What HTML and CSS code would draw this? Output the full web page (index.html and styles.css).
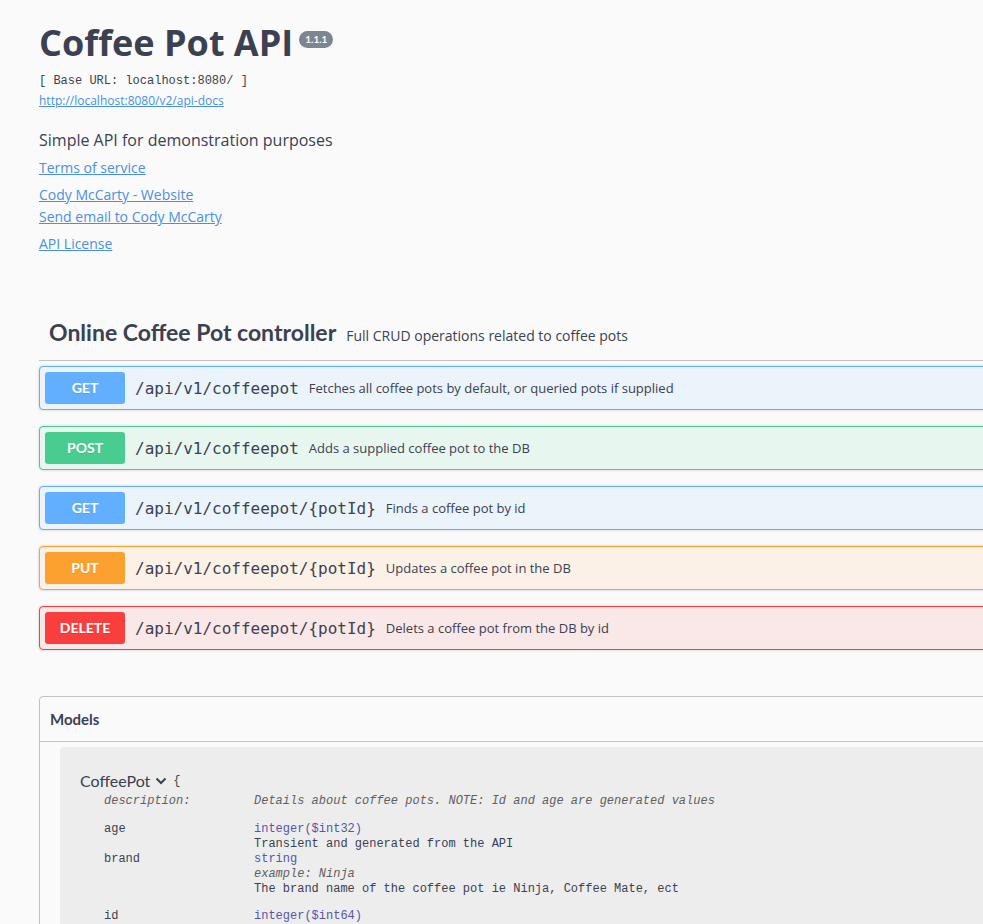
FILE: index.html
```html
<!DOCTYPE html>
<html lang="en">
<head>
<meta charset="utf-8">
<title>Coffee Pot API</title>
<link rel="stylesheet" href="styles.css">
</head>
<body>
<div class="wrapper">
  <section class="info">
    <div class="title-row">
      <h2 class="title">Coffee Pot API</h2>
      <span class="version">1.1.1</span>
    </div>
    <div class="base-url">[ Base URL: localhost:8080/ ]</div>
    <a class="spec-link" href="#">http://localhost:8080/v2/api-docs</a>
    <p class="desc">Simple API for demonstration purposes</p>
    <div class="info-link tos"><a href="#">Terms of service</a></div>
    <div class="info-link contact"><a href="#">Cody McCarty - Website</a></div>
    <div class="info-link email"><a href="#">Send email to Cody McCarty</a></div>
    <div class="info-link license"><a href="#">API License</a></div>
  </section>

  <section class="tag">
    <h4 class="tag-header">
      <span class="tag-name">Online Coffee Pot controller</span>
      <span class="tag-desc">Full CRUD operations related to coffee pots</span>
    </h4>
    <div class="ops">
      <div class="op get">
        <span class="method">GET</span>
        <span class="path">/api/v1/coffeepot</span>
        <span class="summary">Fetches all coffee pots by default, or queried pots if supplied</span>
      </div>
      <div class="op post">
        <span class="method">POST</span>
        <span class="path">/api/v1/coffeepot</span>
        <span class="summary">Adds a supplied coffee pot to the DB</span>
      </div>
      <div class="op get">
        <span class="method">GET</span>
        <span class="path">/api/v1/coffeepot/{potId}</span>
        <span class="summary">Finds a coffee pot by id</span>
      </div>
      <div class="op put">
        <span class="method">PUT</span>
        <span class="path">/api/v1/coffeepot/{potId}</span>
        <span class="summary">Updates a coffee pot in the DB</span>
      </div>
      <div class="op delete">
        <span class="method">DELETE</span>
        <span class="path">/api/v1/coffeepot/{potId}</span>
        <span class="summary">Delets a coffee pot from the DB by id</span>
      </div>
    </div>
  </section>

  <section class="models">
    <h4 class="models-header">Models</h4>
    <div class="models-body">
      <div class="model">
        <div class="model-title">
          <span class="model-name">CoffeePot</span>
          <svg class="chevron" width="12" height="8" viewBox="0 0 12 8"><path d="M1.5 1.5 L6 6 L10.5 1.5" fill="none" stroke="#3b4151" stroke-width="2"/></svg>
          <span class="brace">{</span>
        </div>
        <div class="props">
          <div class="prop-row desc-row">
            <div class="pname italic">description:</div>
            <div class="pval italic">Details about coffee pots. NOTE: Id and age are generated values</div>
          </div>
          <div class="prop-row">
            <div class="pname">age</div>
            <div class="pval"><span class="type">integer($int32)</span><br>Transient and generated from the API</div>
          </div>
          <div class="prop-row">
            <div class="pname">brand</div>
            <div class="pval"><span class="type">string</span><br><span class="italic">example: Ninja</span><br>The brand name of the coffee pot ie Ninja, Coffee Mate, ect</div>
          </div>
          <div class="prop-row id-row">
            <div class="pname">id</div>
            <div class="pval"><span class="type">integer($int64)</span><br>Unique identifier</div>
          </div>
        </div>
      </div>
    </div>
  </section>
</div>
</body>
</html>
```
FILE: styles.css
```css
html, body {
  margin: 0;
  padding: 0;
  background: #fafafa;
  overflow: hidden;
}
body {
  font-family: "Open Sans", "Liberation Sans", sans-serif;
  color: #3b4151;
}
.wrapper {
  width: 1400px;
  padding: 21px 0 0 39px;
  box-sizing: border-box;
}
.info { margin: 0; }
.title-row {
  display: flex;
  align-items: flex-start;
}
.title {
  margin: 0;
  font-size: 36px;
  line-height: 43px;
  font-weight: 700;
  color: #3b4151;
}
.version {
  margin: 10px 0 0 6px;
  background: #7d8492;
  color: #fff;
  border-radius: 57px;
  font-family: "Lato", sans-serif;
  font-weight: 700;
  font-size: 10px;
  line-height: 17px;
  padding: 0 6px;
}
.base-url {
  margin-top: 9px;
  font-family: "Liberation Mono", monospace;
  font-size: 12px;
  line-height: 16px;
  color: #3b4151;
  font-weight: 300;
}
.spec-link {
  display: block;
  margin-top: 4px;
  font-size: 12px;
  line-height: 16px;
  color: #4990e2;
}
a { color: #4990e2; }
.desc {
  margin: 20px 0 0;
  font-size: 16px;
  line-height: 22px;
}
.info-link {
  font-size: 14px;
  line-height: 20px;
}
.tos { margin-top: 7px; }
.contact { margin-top: 7px; }
.email { margin-top: 2px; }
.license { margin-top: 7px; }

.tag { margin-top: 54px; }
.tag-header {
  margin: 0;
  display: flex;
  align-items: baseline;
  padding: 10px 10px 14px 10px;
  border-bottom: 1px solid rgba(59, 65, 81, .3);
  font-weight: normal;
}
.tag-name {
  font-family: "Lato", sans-serif;
  font-weight: 700;
  font-size: 23px;
  line-height: 28px;
  color: #3b4151;
}
.tag-desc {
  margin-left: 10px;
  font-size: 14px;
  color: #3b4151;
}
.ops {
  display: flex;
  flex-direction: column;
  gap: 16px;
  padding-top: 5px;
}
.op {
  display: flex;
  align-items: center;
  height: 44px;
  box-sizing: border-box;
  border: 1px solid;
  border-radius: 4px;
  padding: 0 5px;
  box-shadow: 0 0 3px rgba(0, 0, 0, .19);
}
.op.get { border-color: #61affe; background: #ebf3fb; }
.op.post { border-color: #49cc90; background: #e8f6f0; }
.op.put { border-color: #fca130; background: #fbf1e6; }
.op.delete { border-color: #f93e3e; background: #fae7e7; }
.method {
  width: 80px;
  height: 32px;
  line-height: 32px;
  text-align: center;
  border-radius: 3px;
  color: #fff;
  font-family: "Lato", sans-serif;
  font-weight: 700;
  font-size: 14px;
  text-shadow: 0 1px 0 rgba(0, 0, 0, .1);
}
.get .method { background: #61affe; }
.post .method { background: #49cc90; }
.put .method { background: #fca130; }
.delete .method { background: #f93e3e; }
.path {
  margin-left: 10px;
  font-family: "DejaVu Sans Mono", monospace;
  font-size: 16px;
  color: #3b4151;
}
.summary {
  margin-left: 10px;
  font-size: 13px;
  color: #3b4151;
}

.models {
  margin-top: 46px;
  border: 1px solid rgba(59, 65, 81, .3);
  border-radius: 4px;
}
.models-header {
  margin: 0;
  padding: 12px 10px 11px;
  border-bottom: 1px solid rgba(59, 65, 81, .3);
  font-family: "Lato", sans-serif;
  font-weight: 700;
  font-size: 15px;
  line-height: 21px;
  color: #3b4151;
}
.models-body {
  padding: 5px 20px 20px;
}
.model {
  background: rgba(0, 0, 0, .05);
  border-radius: 4px;
  padding: 24px 20px 20px;
}
.model-title {
  display: flex;
  align-items: center;
  font-family: "Lato", sans-serif;
  font-size: 16px;
  line-height: 20px;
  color: #3b4151;
  margin-bottom: 3px;
}
.chevron { margin-left: 5px; }
.brace {
  margin-left: 6px;
  font-family: "Liberation Mono", monospace;
  font-size: 12px;
}
.props {
  padding-left: 24px;
  font-family: "Liberation Mono", monospace;
  font-size: 12px;
  line-height: 15px;
  color: #3b4151;
}
.prop-row {
  display: flex;
}
.pname { width: 150px; }
.desc-row { margin-bottom: 13px; }
.id-row { margin-top: 12px; }
.italic { font-style: italic; color: #606060; }
.type { color: #55a; }
```
